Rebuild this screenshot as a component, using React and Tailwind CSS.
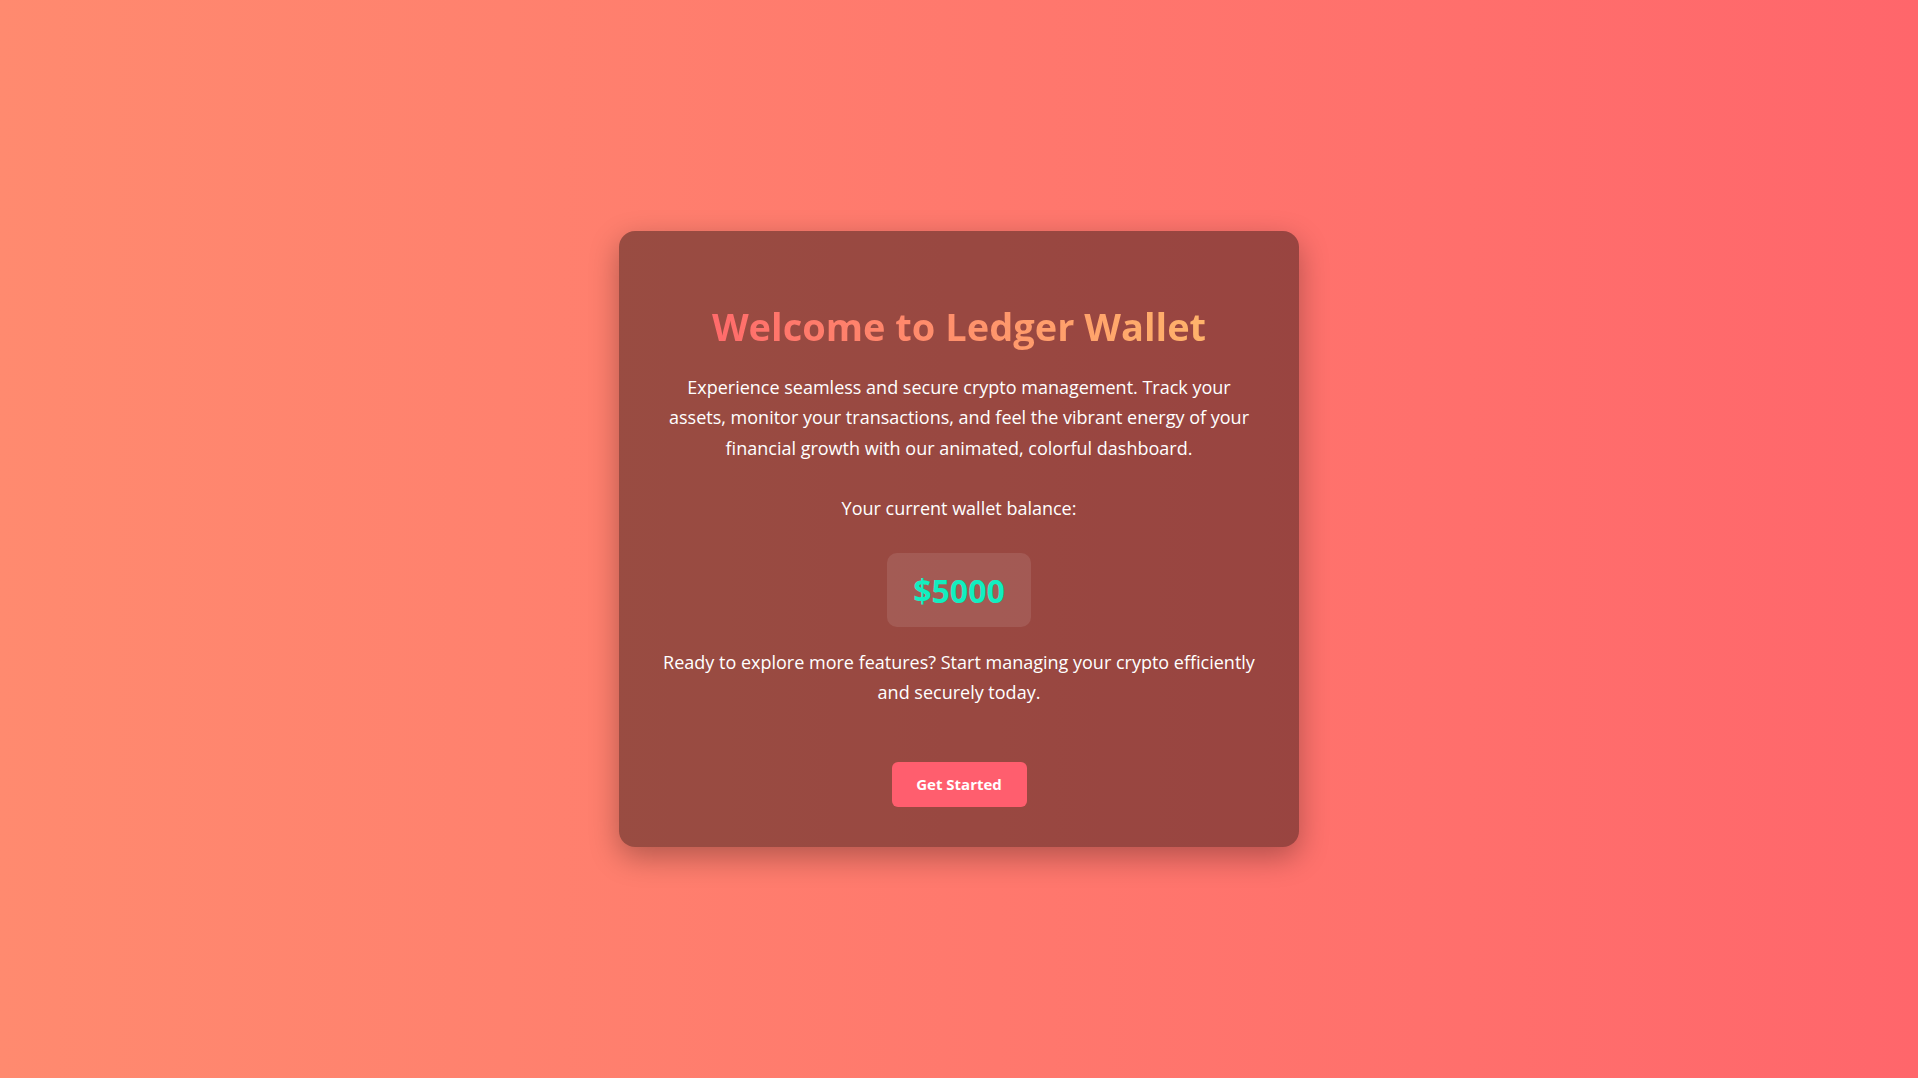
import React from 'react';

const WelcomeCard = () => {
  return (
    <div
      className="flex w-[680px] flex-col items-center rounded-2xl bg-black/40 p-10 text-center text-white shadow-[0_10px_30px_rgba(0,0,0,0.3)]"
      style={{ fontFamily: '"Open Sans", "Noto Sans", sans-serif' }}
    >
      <h1 className="mt-[33px] bg-gradient-to-r from-[#ff6b6b] to-[#ffb36b] bg-clip-text text-[38px] leading-[1.2] font-bold text-transparent">
        Welcome to Ledger Wallet
      </h1>
      <p className="mt-[22px] text-[18px] leading-[30.4px]">
        Experience seamless and secure crypto management. Track your assets, monitor your transactions, and feel the
        vibrant energy of your financial growth with our animated, colorful dashboard.
      </p>
      <p className="mt-[30px] text-[18px] leading-[30.4px]">Your current wallet balance:</p>
      <div className="mt-[29px] flex h-[74px] w-[144px] items-center justify-center rounded-[10px] bg-white/10">
        <span className="pt-[2px] text-[32px] font-bold text-[#12eec0]">$5000</span>
      </div>
      <p className="mt-5 text-[18px] leading-[30.4px]">
        Ready to explore more features? Start managing your crypto efficiently and securely today.
      </p>
      <button className="mt-[54px] flex h-[45px] w-[135px] items-center justify-center rounded-md bg-[#ff5e6e] text-[15px] font-bold text-white">
        Get Started
      </button>
    </div>
  );
};

export default function App() {
  return (
    <div className="flex min-h-screen items-center justify-center bg-gradient-to-r from-[#ff8a6f] to-[#ff666b]">
      <WelcomeCard />
    </div>
  );
}
